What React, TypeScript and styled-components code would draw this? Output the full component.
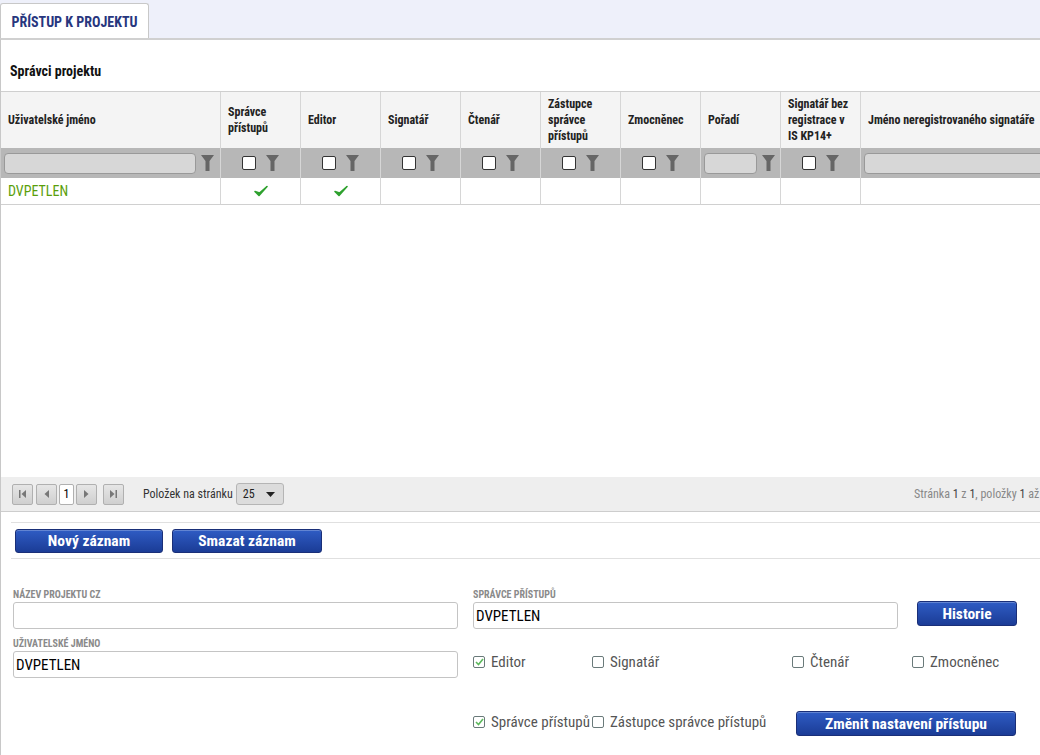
import React from "react";
import styled, { createGlobalStyle } from "styled-components";

const GlobalStyle = createGlobalStyle`
  html, body {
    margin: 0;
    padding: 0;
    background: #fff;
    overflow: hidden;
  }
  body {
    font-family: "Roboto Condensed", "Liberation Sans Narrow", "DejaVu Sans Condensed", Roboto, sans-serif;
    font-size: 12px;
    color: #222;
  }
`;

const COLS = "220px repeat(8, 80px) 240px";

const columns = [
  { title: "Uživatelské jméno", filter: "text" },
  { title: "Správce přístupů", filter: "check" },
  { title: "Editor", filter: "check" },
  { title: "Signatář", filter: "check" },
  { title: "Čtenář", filter: "check" },
  { title: "Zástupce správce přístupů", filter: "check" },
  { title: "Zmocněnec", filter: "check" },
  { title: "Pořadí", filter: "short" },
  { title: "Signatář bez registrace v IS KP14+", filter: "check" },
  { title: "Jméno neregistrovaného signatáře", filter: "text" },
];

const Page = styled.div`
  width: 1040px;
  height: 755px;
  overflow: hidden;
  background: #eef0fa;
`;

const TabBar = styled.div`
  display: flex;
  padding-top: 3px;
  height: 35px;
`;

const Tab = styled.div`
  width: 149px;
  background: #fff;
  border: 1px solid #c8c8c8;
  border-bottom: none;
  border-radius: 3px 3px 0 0;
  color: #27367e;
  font-weight: bold;
  font-size: 14px;
  display: flex;
  align-items: center;
  justify-content: center;
  padding-top: 2px;
  box-sizing: border-box;
`;

const Panel = styled.div`
  background: #fff;
  border-top: 2px solid #d0d0d0;
  border-left: 1px solid #c8c8c8;
  height: 717px;
  width: 1100px;
`;

const Heading = styled.div`
  font-weight: bold;
  font-size: 14px;
  color: #111;
  padding: 23px 0 0 9px;
  height: 28px;
`;

const Grid = styled.div`
  display: grid;
  grid-template-columns: ${COLS};
  border-top: 1px solid #cfcfcf;
`;

const HeadCell = styled.div`
  height: 56px;
  background: #f4f4f4;
  border-right: 1px solid #d6d6d6;
  font-weight: bold;
  font-size: 12px;
  line-height: 16px;
  color: #222;
  padding: 0 6px 0 7px;
  display: flex;
  align-items: center;
`;

const FilterCell = styled.div<{ $text?: boolean }>`
  height: 30px;
  background: #b7b7b7;
  border-right: 1px solid #d6d6d6;
  display: flex;
  align-items: center;
  justify-content: ${(p) => (p.$text ? "flex-start" : "center")};
  gap: ${(p) => (p.$text ? 5 : 10)}px;
  padding: 0 3px;
`;

const FilterInput = styled.div<{ $w: string }>`
  width: ${(p) => p.$w};
  height: 21px;
  background: #d7d7d7;
  border: 1px solid #999;
  border-radius: 4px;
  box-sizing: border-box;
  flex-shrink: 0;
`;

const FilterBox = styled.div`
  width: 12px;
  height: 12px;
  background: #fff;
  border: 1px solid #333;
  border-radius: 2px;
`;

const DataCell = styled.div<{ $green?: boolean }>`
  height: 26px;
  border-right: 1px solid #d6d6d6;
  border-bottom: 1px solid #d0d0d0;
  display: flex;
  align-items: center;
  justify-content: ${(p) => (p.$green ? "flex-start" : "center")};
  padding-left: ${(p) => (p.$green ? "7px" : "0")};
  color: #5a9e0a;
  font-size: 14px;
`;

const TableSpace = styled.div`
  height: 272px;
`;

const Pager = styled.div`
  width: 1040px;
  height: 35px;
  background: #eeeeee;
  border-bottom: 1px solid #cdcdcd;
  display: flex;
  align-items: center;
  padding-left: 11px;
  box-sizing: border-box;
`;

const PageBtn = styled.div<{ $ml?: number }>`
  width: 21px;
  height: 21px;
  margin-left: ${(p) => p.$ml ?? 0}px;
  border: 1px solid #b0b0b0;
  border-radius: 2px;
  background: linear-gradient(#e6e6e6, #cfcfcf);
  box-sizing: border-box;
  display: flex;
  align-items: center;
  justify-content: center;
`;

const PageNum = styled.div`
  width: 15px;
  height: 21px;
  margin-left: 2px;
  border: 1px solid #b0b0b0;
  border-radius: 2px;
  background: #fff;
  box-sizing: border-box;
  font-size: 12px;
  display: flex;
  align-items: center;
  justify-content: center;
  color: #000;
`;

const PagerLabel = styled.span`
  margin-left: 19px;
  font-size: 12px;
  color: #333;
`;

const PageSize = styled.div`
  margin-left: 3px;
  width: 48px;
  height: 22px;
  border: 1px solid #b5b5b5;
  border-radius: 3px;
  background: #dcdcdc;
  box-sizing: border-box;
  display: flex;
  align-items: center;
  justify-content: space-between;
  padding: 0 8px 0 6px;
  font-size: 12px;
  color: #222;
`;

const PagerInfo = styled.span`
  margin-left: auto;
  white-space: nowrap;
  color: #888;
  font-size: 12px;
  width: 127px;
  overflow: hidden;
  b {
    color: #444;
    font-weight: normal;
  }
`;

const Actions = styled.div`
  margin: 10px 0 0 10px;
  width: 1030px;
  border-top: 1px solid #e0e0e0;
  border-bottom: 1px solid #e0e0e0;
  padding: 6px 0 5px 4px;
  display: flex;
  gap: 9px;
  box-sizing: border-box;
`;

const BlueButton = styled.button<{ $w: number }>`
  width: ${(p) => p.$w}px;
  height: 24px;
  border: 1px solid #1a2f78;
  border-radius: 3px;
  background: linear-gradient(#2f5cc4, #1b3c96);
  color: #fff;
  font-family: inherit;
  font-weight: bold;
  font-size: 15.5px;
  padding: 0;
  box-shadow: inset 0 1px 0 rgba(255, 255, 255, 0.25);
`;

const Form = styled.div`
  display: grid;
  grid-template-columns: 445px 543px;
  column-gap: 15px;
  padding: 30px 0 0 12px;
  width: 1040px;
  box-sizing: border-box;
`;

const Field = styled.div`
  display: flex;
  flex-direction: column;
  gap: 2px;
`;

const Label = styled.div`
  font-size: 10px;
  font-weight: bold;
  color: #8a8a8a;
  text-transform: uppercase;
  height: 11px;
  line-height: 11px;
`;

const TextInput = styled.div`
  height: 27px;
  border: 1px solid #c4c4c4;
  border-radius: 3px;
  box-sizing: border-box;
  font-size: 15px;
  color: #000;
  display: flex;
  align-items: center;
  padding-left: 2px;
`;

const LeftCol = styled.div`
  display: flex;
  flex-direction: column;
  gap: 9px;
`;

const RightCol = styled.div`
  display: flex;
  flex-direction: column;
`;

const TopRow = styled.div`
  display: grid;
  grid-template-columns: 425px 100px;
  column-gap: 19px;
  align-items: end;
`;

const CheckRow = styled.div<{ $mt: number; $cols: string }>`
  display: grid;
  grid-template-columns: ${(p) => p.$cols};
  margin-top: ${(p) => p.$mt}px;
  align-items: start;
`;

const CheckItem = styled.label`
  display: flex;
  align-items: center;
  height: 20px;
  gap: 6px;
  font-size: 15px;
  color: #555;
  white-space: nowrap;
`;

const Box = styled.span`
  width: 12px;
  height: 12px;
  border: 1px solid #6a7a7a;
  border-radius: 2px;
  box-sizing: border-box;
  display: inline-flex;
  align-items: center;
  justify-content: center;
  background: #fff;
  flex-shrink: 0;
`;

const Funnel = () => (
  <svg width="13" height="16" viewBox="0 0 13 16">
    <path d="M0 0 H13 L8.5 6 V16 H4.5 V6 Z" fill="#666" />
  </svg>
);

const Tick = () => (
  <svg width="14" height="12" viewBox="0 0 14 12">
    <path d="M1 6.5 L5 10.5 L13 1.5 L5.5 8 Z" fill="#2ea12e" stroke="#2ea12e" strokeWidth="1.6" strokeLinejoin="round" />
  </svg>
);

const Check = ({ on, children }: { on?: boolean; children: React.ReactNode }) => (
  <CheckItem>
    <Box>
      {on && (
        <svg width="9" height="8" viewBox="0 0 9 8">
          <path d="M1 4 L3.5 6.5 L8 1" fill="none" stroke="#5cb85c" strokeWidth="1.6" />
        </svg>
      )}
    </Box>
    {children}
  </CheckItem>
);

const Arrow = ({ d }: { d: string }) => (
  <svg width="9" height="10" viewBox="0 0 9 10">
    <path d={d} fill="#777" />
  </svg>
);

export default function App() {
  return (
    <Page>
      <GlobalStyle />
      <TabBar>
        <Tab>PŘÍSTUP K PROJEKTU</Tab>
      </TabBar>
      <Panel>
        <Heading>Správci projektu</Heading>
        <Grid>
          {columns.map((c) => (
            <HeadCell key={c.title}>{c.title}</HeadCell>
          ))}
          {columns.map((c, i) => (
            <FilterCell key={"f" + i} $text={c.filter !== "check"}>
              {c.filter === "text" && <FilterInput $w={i === 0 ? "192px" : "220px"} />}
              {c.filter === "short" && <FilterInput $w="53px" />}
              {c.filter === "check" && <FilterBox />}
              {i < 9 && <Funnel />}
            </FilterCell>
          ))}
          <DataCell $green>DVPETLEN</DataCell>
          <DataCell>
            <Tick />
          </DataCell>
          <DataCell>
            <Tick />
          </DataCell>
          {Array.from({ length: 7 }).map((_, i) => (
            <DataCell key={"d" + i} />
          ))}
        </Grid>
        <TableSpace />
        <Pager>
          <PageBtn>
            <Arrow d="M1 1 H2.5 V9 H1 Z M8 1 V9 L3.5 5 Z" />
          </PageBtn>
          <PageBtn $ml={3}>
            <Arrow d="M7 1 V9 L2.5 5 Z" />
          </PageBtn>
          <PageNum>1</PageNum>
          <PageBtn $ml={2}>
            <Arrow d="M2 1 V9 L6.5 5 Z" />
          </PageBtn>
          <PageBtn $ml={6}>
            <Arrow d="M1 1 V9 L5.5 5 Z M6.5 1 H8 V9 H6.5 Z" />
          </PageBtn>
          <PagerLabel>Položek na stránku</PagerLabel>
          <PageSize>
            25
            <svg width="9" height="5" viewBox="0 0 9 5">
              <path d="M0 0 H9 L4.5 5 Z" fill="#222" />
            </svg>
          </PageSize>
          <PagerInfo>
            Stránka <b>1</b> z <b>1</b>, položky <b>1</b> až <b>1</b> z <b>1</b>
          </PagerInfo>
        </Pager>
        <Actions>
          <BlueButton $w={148}>Nový záznam</BlueButton>
          <BlueButton $w={150}>Smazat záznam</BlueButton>
        </Actions>
        <Form>
          <LeftCol>
            <Field>
              <Label>Název projektu CZ</Label>
              <TextInput />
            </Field>
            <Field>
              <Label>Uživatelské jméno</Label>
              <TextInput>DVPETLEN</TextInput>
            </Field>
          </LeftCol>
          <RightCol>
            <TopRow>
              <Field>
                <Label>Správce přístupů</Label>
                <TextInput>DVPETLEN</TextInput>
              </Field>
              <BlueButton $w={100} style={{ marginBottom: 3, height: 25 }}>
                Historie
              </BlueButton>
            </TopRow>
            <CheckRow $mt={23} $cols="119px 200px 120px 100px">
              <Check on>Editor</Check>
              <Check>Signatář</Check>
              <Check>Čtenář</Check>
              <Check>Zmocněnec</Check>
            </CheckRow>
            <CheckRow $mt={40} $cols="119px 204px 220px">
              <Check on>Správce přístupů</Check>
              <Check>Zástupce správce přístupů</Check>
              <BlueButton $w={220} style={{ height: 25, marginTop: -1 }}>
                Změnit nastavení přístupu
              </BlueButton>
            </CheckRow>
          </RightCol>
        </Form>
      </Panel>
    </Page>
  );
}
